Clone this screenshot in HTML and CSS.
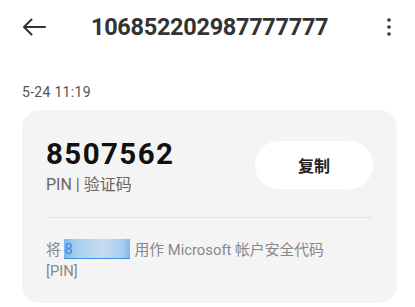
FILE: index.html
```html
<!DOCTYPE html>
<html lang="zh-CN">
<head>
<meta charset="utf-8">
<link rel="stylesheet" href="styles.css">
</head>
<body>
<header class="topbar">
  <svg class="back" width="24" height="18" viewBox="0 0 24 18"><path d="M23 9H2M9.5 1.5L2 9l7.5 7.5" fill="none" stroke="#333" stroke-width="2" stroke-linecap="round" stroke-linejoin="round"/></svg>
  <h1 class="title">106852202987777777</h1>
  <svg class="more" width="6" height="20" viewBox="0 0 6 20"><circle cx="3" cy="3" r="1.8" fill="#333"/><circle cx="3" cy="10" r="1.8" fill="#333"/><circle cx="3" cy="17" r="1.8" fill="#333"/></svg>
</header>
<div class="date">5-24 11:19</div>
<section class="card">
  <div class="code-row">
    <div class="code-info">
      <div class="code">8507562</div>
      <div class="label">PIN | 验证码</div>
    </div>
    <button class="copy">复制</button>
  </div>
  <div class="divider"></div>
  <p class="msg">将 <span class="blur">8</span>用作 Microsoft 帐户安全代码<br>[PIN]</p>
</section>
</body>
</html>
```
FILE: styles.css
```css
* { box-sizing: border-box; }
html, body { margin: 0; padding: 0; background: #fff; }
body {
  width: 415px; height: 307px; overflow: hidden;
  font-family: Roboto, "Noto Sans CJK SC", sans-serif;
  color: #222;
}
.topbar {
  height: 54px;
  display: flex; align-items: center;
  padding: 0 0 0 22px;
}
.back { flex: none; }
.title {
  margin: 0 0 0 45px;
  font-size: 23.5px; font-weight: 700; color: #333;
  letter-spacing: -0.3px;
  flex: 1;
}
.more { flex: none; margin-right: 23px; }
.date {
  margin-top: 30px;
  padding-left: 22px;
  font-size: 14px; color: #555; line-height: 16px;
  letter-spacing: 0.3px;
}
.card {
  margin: 10px 18px 0 22px;
  height: 193px;
  background: #f4f4f4;
  border-radius: 18px;
  padding: 27px 24px 0 24px;
}
.code-row { display: flex; justify-content: space-between; align-items: flex-start; }
.code { font-size: 29.5px; font-weight: 700; color: #111; line-height: 34px; letter-spacing: 1.4px; }
.label { font-size: 16px; color: #666; line-height: 20px; margin-top: 4px; }
.copy {
  margin-top: 4px;
  width: 118px; height: 48px;
  border: none; border-radius: 24px;
  background: #fff;
  font-family: "Noto Sans CJK SC", sans-serif;
  font-size: 16px; font-weight: 700; color: #222;
}
.divider { height: 1px; background: #e4e4e4; margin-top: 22px; }
.msg {
  margin: 21px 0 0;
  font-size: 14.8px; line-height: 21px; color: #888;
}
.blur {
  display: inline-block;
  width: 66px; height: 20px; vertical-align: -4px;
  background: linear-gradient(90deg, #7ab8ee 0%, #a9cfee 20%, #c7dcf0 60%, #a5ccef 90%, #7ab8ee 100%);
  color: #3b8ee0; overflow: hidden;
  border-bottom: 1px solid #3b8ee0;
  margin-right: 4px;
  filter: blur(0.5px);
}
```
